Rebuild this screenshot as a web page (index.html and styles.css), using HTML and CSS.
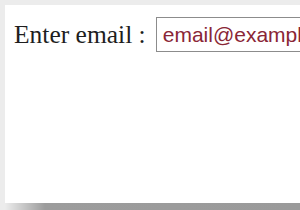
FILE: index.html
```html
<!DOCTYPE html>
<html lang="en">
<head>
  <meta charset="UTF-8">
  <title>Email</title>
  <link rel="stylesheet" href="styles.css">
</head>
<body>
  <div class="card">
    <div class="row">
      <label for="email">Enter email :</label>
      <input type="text" id="email" value="email@example.com">
    </div>
  </div>
  <div class="shadow"></div>
</body>
</html>
```

FILE: styles.css
```css
*{
  margin:0;
  padding:0;
  box-sizing:border-box;
}
body{
  background:#ececec;
  padding:5px 0 0 5px;
  width:300px;
  height:210px;
  overflow:hidden;
}
.card{
  background:#fff;
  height:198px;
  padding:12px 0 0 9px;
  overflow:hidden;
}
.row{
  display:flex;
  align-items:center;
  gap:10px;
}
.row label{
  font-family:"Liberation Serif", serif;
  font-size:25.5px;
  color:#1e1e1e;
  white-space:nowrap;
}
.row input{
  flex-shrink:0;
  width:220px;
  height:35px;
  border:1px solid #8c8c8c;
  padding-left:6px;
  font-family:"Liberation Sans", sans-serif;
  font-size:21px;
  color:#8a2636;
  outline:none;
}
.shadow{
  height:7px;
  background:linear-gradient(to right, #ececec 0px, #9c9c9c 40px, #9a9a9a 100%);
}
```
